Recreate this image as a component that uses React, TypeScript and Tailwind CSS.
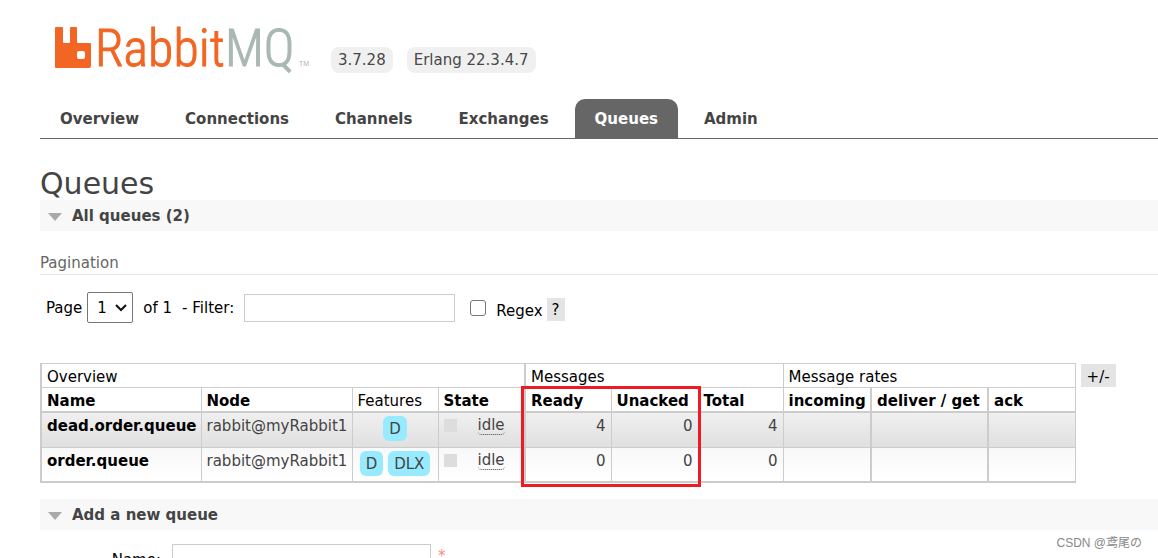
import { useState } from "react";

const tabs = ["Overview", "Connections", "Channels", "Exchanges", "Queues", "Admin"];

const queues = [
    { name: "dead.order.queue", node: "rabbit@myRabbit1", features: ["D"], state: "idle", ready: 4, unacked: 0, total: 4 },
    { name: "order.queue", node: "rabbit@myRabbit1", features: ["D", "DLX"], state: "idle", ready: 0, unacked: 0, total: 0 },
];

const Logo = () => (
    <svg width="260" height="50" viewBox="0 0 260 50" role="img" aria-label="RabbitMQ" className="overflow-visible">
        <path
            fill="#f26522"
            fillRule="evenodd"
            d="M2 4h6q1 0 1 1v14q0 1 1 1h5q1 0 1-1V5q0-1 1-1h5q1 0 1 1v14q0 1 1 1h12q1 0 1 1v22q0 2-2 2H2q-1 0-1-1V5q0-1 1-1zM25 28q-2 0-2 2v4q0 2 2 2h4q2 0 2-2v-4q0-2-2-2z"
        />
        <text x="41" y="43" fontSize="52" fill="#f26522" stroke="#f26522" className="font-['Roboto_Condensed',sans-serif] font-light">Rabbit</text>
        <text x="171" y="43" fontSize="52" fill="#a9b8b2" stroke="#a9b8b2" className="font-['Roboto_Condensed',sans-serif] font-light">MQ</text>
        <text x="245" y="43" fontSize="7" fill="#a9b8b2" className="font-['Liberation_Sans',sans-serif]">TM</text>
    </svg>
);

const SectionTitle = ({ children }: { children: string }) => (
    <h2>
        <button type="button" className="flex w-full items-center gap-2.5 bg-[#f8f8f8] px-2 pb-[3px] pt-[5px] text-left font-bold leading-[23px] text-[#444]">
            <svg width="14" height="8" viewBox="0 0 14 8">
                <path d="M0 0h14L7 8z" fill="#aaa" />
            </svg>
            {children}
        </button>
    </h2>
);

const Header = () => {
    const [active, setActive] = useState("Queues");

    return (
        <header>
            <div className="flex items-end pl-3.5">
                <Logo />
                <div className="ml-[17px] flex gap-3.5 leading-5 text-[#484848]">
                    <span className="rounded-lg bg-[#f0f0f0] px-[7px] py-[3px]">3.7.28</span>
                    <span className="rounded-lg bg-[#f0f0f0] px-[7px] py-[3px]">Erlang 22.3.4.7</span>
                </div>
            </div>
            <nav className="mt-[26px] flex gap-1.5 border-b border-[#666]">
                {tabs.map((tab) => (
                    <a
                        key={tab}
                        href="#"
                        onClick={() => { setActive(tab) }}
                        className={tab === active
                            ? "rounded-t-[10px] bg-[#666] px-5 pb-[7px] pt-[9px] font-bold leading-[23px] text-white"
                            : "px-5 pb-[7px] pt-[9px] font-bold leading-[23px] text-[#444]"}
                    >
                        {tab}
                    </a>
                ))}
            </nav>
        </header>
    );
};

const Pagination = () => (
    <div className="mt-[21px]">
        <h3 className="border-b border-[#e4e4e4] leading-[22px] text-[#666]">Pagination</h3>
        <div className="mt-[17px] flex items-center pl-1.5 leading-5">
            <label htmlFor="page">Page</label>
            <div className="relative ml-[5px]">
                <select id="page" className="h-[31px] w-[46px] appearance-none rounded-[2px] border border-[#767676] bg-white pl-[9px]">
                    <option>1</option>
                </select>
                <svg className="pointer-events-none absolute right-1.5 top-3" width="12" height="8" viewBox="0 0 12 8">
                    <path d="M1 1l5 5 5-5" fill="none" stroke="#111" strokeWidth="2" />
                </svg>
            </div>
            <span className="ml-2.5">of 1</span>
            <label htmlFor="filter" className="ml-2.5">- Filter:</label>
            <input id="filter" type="text" className="ml-2.5 h-7 w-[211px] border border-[#ccc] px-1" />
            <input id="regex" type="checkbox" className="ml-[15px] size-4 appearance-none rounded-[3px] border border-[#767676] bg-white" />
            <label htmlFor="regex" className="ml-2.5 mt-1.5">Regex</label>
            <button type="button" className="ml-1 mt-1 h-[23px] bg-[#e4e4e4] px-[5px]">?</button>
        </div>
    </div>
);

const QueueTable = () => (
    <div className="mt-10 flex items-start gap-[5px]">
        <div className="relative">
            <table className="w-[1034px] table-fixed border-collapse border border-l-2 border-b-2 border-[#ccc] leading-[18px]">
                <colgroup>
                    <col className="w-[160px]" />
                    <col className="w-[151px]" />
                    <col className="w-[86px]" />
                    <col className="w-[87px]" />
                    <col className="w-[86px]" />
                    <col className="w-[87px]" />
                    <col className="w-[85px]" />
                    <col className="w-[88px]" />
                    <col className="w-[117px]" />
                    <col className="w-[87px]" />
                </colgroup>
                <thead className="whitespace-nowrap text-left [&_th]:border [&_th]:border-[#ccc] [&_th]:px-[5px] [&_th]:pb-px [&_th]:pt-1">
                    <tr>
                        <th colSpan={4} className="border-r-2! font-normal">Overview</th>
                        <th colSpan={3} className="font-normal">Messages</th>
                        <th colSpan={3} className="font-normal">Message rates</th>
                    </tr>
                    <tr className="border-b-2 border-[#ccc]">
                        <th>Name</th>
                        <th>Node</th>
                        <th className="font-normal">Features</th>
                        <th className="border-r-2!">State</th>
                        <th>Ready</th>
                        <th>Unacked</th>
                        <th>Total</th>
                        <th className="border-r-2!">incoming</th>
                        <th className="border-r-2!">deliver / get</th>
                        <th>ack</th>
                    </tr>
                </thead>
                <tbody className="whitespace-nowrap text-[#444] [&_td]:h-[35px] [&_td]:border [&_td]:border-[#ccc] [&_td]:px-[5px] [&_td]:pt-1 [&_td]:align-top">
                    {queues.map((queue, i) => (
                        <tr key={queue.name} className={i % 2 === 0 ? "bg-linear-to-b from-[#f0f0f0] to-[#e0e0e0]" : "bg-linear-to-b from-[#f8f8f8] to-white"}>
                            <td><a href="#" className="font-bold text-black">{queue.name}</a></td>
                            <td>{queue.node}</td>
                            <td className="pt-[3px]!">
                                <div className="flex justify-center gap-[5px]">
                                    {queue.features.map((feature) => (
                                        <abbr key={feature} className="rounded-md bg-[#98ebff] px-1.5 pb-[3px] pt-1">{feature}</abbr>
                                    ))}
                                </div>
                            </td>
                            <td className="border-r-2!">
                                <div className="flex items-start gap-[21px]">
                                    <span className="mt-0.5 size-[13px] bg-[#ddd]" />
                                    <span className="rounded-[4px] border-b border-dotted border-[#444] leading-[17px]">{queue.state}</span>
                                </div>
                            </td>
                            <td className="text-right">{queue.ready}</td>
                            <td className="text-right">{queue.unacked}</td>
                            <td className="text-right">{queue.total}</td>
                            <td className="border-r-2!" />
                            <td className="border-r-2!" />
                            <td />
                        </tr>
                    ))}
                </tbody>
            </table>
            {/* highlight around the Ready / Unacked columns */}
            <div className="pointer-events-none absolute left-[481px] top-[23px] h-[101px] w-[180px] border-3 border-[#ed1c24]" />
        </div>
        <button type="button" className="mt-px h-[23px] bg-[#e4e4e4] px-1.5 pt-0.5 leading-5">+/-</button>
    </div>
);

const App = () => {
    return (
        <div className="relative h-screen overflow-hidden bg-white pl-10 pt-[23px] font-['DejaVu_Sans',sans-serif] text-[15px] text-black">
            <Header />
            <main>
                <h1 className="mt-7 text-[30px] leading-[33px] text-[#444]">Queues</h1>
                <SectionTitle>All queues (2)</SectionTitle>
                <Pagination />
                <QueueTable />
                <div className="mt-4">
                    <SectionTitle>Add a new queue</SectionTitle>
                </div>
                <form className="mt-3.5 flex items-start">
                    <label htmlFor="name" className="w-[121px] pt-1.5 text-right leading-5">Name:</label>
                    <input id="name" type="text" className="ml-[11px] h-7 w-[259px] border border-[#ccc] px-1" />
                    <span className="ml-[7px] pt-0.5 leading-5 text-[#f88]">*</span>
                </form>
            </main>
            <p className="absolute bottom-1.5 right-4 font-['Liberation_Sans','Noto_Sans_CJK_SC',sans-serif] text-xs leading-[18px] text-[#888]">CSDN @鸢尾の</p>
        </div>
    );
};

export default App;
